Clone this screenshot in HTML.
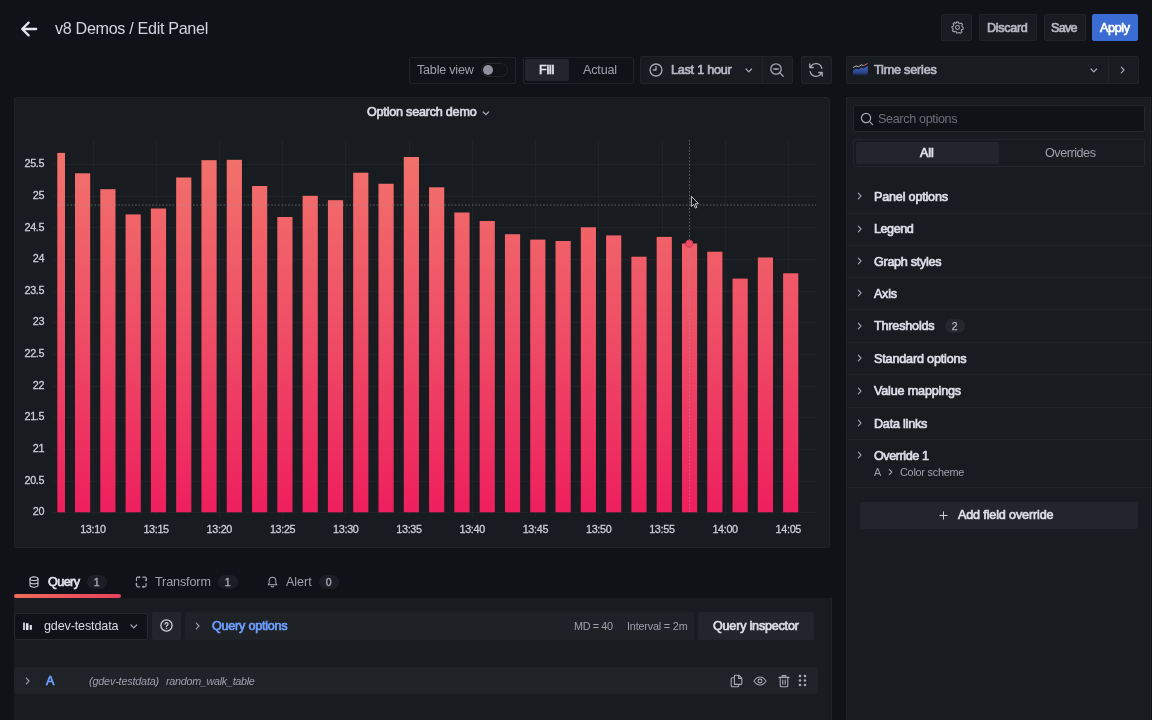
<!DOCTYPE html>
<html lang="en">
<head>
<meta charset="utf-8">
<title>v8 Demos / Edit Panel</title>
<style>
*{box-sizing:border-box;margin:0;padding:0}
html,body{width:1152px;height:720px;overflow:hidden;background:#111217;color:#ccccdc;font-family:"Liberation Sans",Arial,sans-serif;font-size:14px}
.abs{position:absolute}
.btn{position:absolute;height:27.500px;top:13.500px;border-radius:2px;background:#181b1f;border:1px solid #212329;color:#ccccdc;font-size:14px;font-weight:500;display:flex;align-items:center;justify-content:center;white-space:nowrap}
.box{position:absolute;border:1px solid #212329;border-radius:2px;background:#111217}
.t{position:absolute;white-space:nowrap;line-height:1;will-change:transform}
.sec{color:#9d9eab}
.row{position:absolute;left:847px;width:305px;border-top:1px solid #24262b}
.row .t{left:27px;font-weight:700;font-size:14px;color:#d0d1dd}
svg{position:absolute;overflow:visible}
svg.chart,.badge{will-change:transform}
.ic{fill:none;stroke:#a9aab5;stroke-width:1.3;stroke-linecap:round;stroke-linejoin:round}
.chev{fill:none;stroke:#9d9eab;stroke-width:1.2;stroke-linecap:round;stroke-linejoin:round}
.badge{position:absolute;background:rgba(204,204,220,0.07);border-radius:10px;font-size:12px;color:#a6a7b3;-webkit-text-stroke:0.4px #a6a7b3;display:flex;align-items:center;justify-content:center}
</style>
</head>
<body>
<!-- ===== top bar ===== -->
<svg class="abs" style="left:20px;top:20px" width="18" height="18" viewBox="0 0 18 18"><path d="M16.2 9H2.6M8.6 2.6L2.2 9l6.4 6.4" fill="none" stroke="#e4e5ee" stroke-width="2.3" stroke-linecap="round" stroke-linejoin="round"/></svg>

<div class="btn" style="left:941px;width:31px"></div>
<svg style="left:950.500px;top:20.800px" width="13" height="13" viewBox="0 0 14 14"><circle cx="7" cy="7" r="2.1" style="stroke-width:1.1" class="ic"/><path style="stroke-width:1.1" class="ic" d="M5.9 1h2.2l.35 1.6 1.1.47 1.4-.88 1.55 1.55-.88 1.4.47 1.1L13 6.6v2.2l-1.6.35-.47 1.1.88 1.4-1.55 1.55-1.4-.88-1.1.47L7.4 13H5.9l-.35-1.6-1.1-.47-1.4.88L1.5 10.26l.88-1.4-.47-1.1L1 7.4V5.9l1.6-.35.47-1.1-.88-1.4L3.74 1.5l1.4.88 1.1-.47z"/></svg>
<div class="btn" style="left:979px;width:58px"></div>
<div class="btn" style="left:1043.500px;width:42px"></div>
<div class="btn" style="left:1092px;width:46px;background:#3b6cd4;border-color:#3b6cd4"></div>

<!-- ===== toolbar row ===== -->
<div class="box" style="left:408.500px;top:56.500px;width:107px;height:27px"></div>
<div class="abs" style="left:481px;top:63px;width:27px;height:14px;border-radius:7px;background:#111217;border:1px solid #24262c"></div>
<div class="abs" style="left:483px;top:65px;width:10px;height:10px;border-radius:5px;background:#8f909c"></div>

<div class="box" style="left:522.500px;top:56.500px;width:111px;height:27px"></div>
<div class="abs" style="left:525px;top:59px;width:44px;height:22px;background:#22252b;border-radius:2px"></div>

<div class="box" style="left:640px;top:56px;width:153px;height:27.500px;background:#181b1f"></div>
<div class="abs" style="left:762px;top:57px;width:1px;height:26px;background:#212329"></div>
<svg style="left:649px;top:63px" width="14" height="14" viewBox="0 0 14 14"><circle cx="7" cy="7" r="6" class="ic"/><path class="ic" d="M7 3.6V7H4.4"/></svg>
<svg style="left:744.500px;top:68px" width="8" height="5" viewBox="0 0 8 5"><path style="stroke:#a9aab6" class="chev" d="M1 1l2.800 2.800L6.600 1"/></svg>
<svg style="left:769px;top:62px" width="16" height="16" viewBox="0 0 16 16"><circle cx="7" cy="7" r="5.2" class="ic"/><path class="ic" d="M4.7 7h4.6M10.9 10.9l3.3 3.3"/></svg>

<div class="box" style="left:801px;top:56px;width:31px;height:27.500px;background:#181b1f"></div>
<svg style="left:808px;top:62px" width="16" height="16" viewBox="0 0 16 16"><path class="ic" d="M13.8 6.3A6 6 0 0 0 3 4.2L1.8 5.5M1.8 2v3.5h3.5M2.2 9.7A6 6 0 0 0 13 11.8l1.2-1.3M14.2 14v-3.5h-3.5"/></svg>

<div class="box" style="left:845.500px;top:56px;width:293px;height:27.500px;background:#181b1f"></div>
<div class="abs" style="left:1108px;top:57px;width:1px;height:26px;background:#212329"></div>
<svg style="left:853px;top:63px" width="15" height="13" viewBox="0 0 15 13"><defs><linearGradient id="tsg" x1="0" y1="0" x2="0" y2="1"><stop offset="0" stop-color="#4467c0"/><stop offset="0.65" stop-color="#2c4590"/><stop offset="1" stop-color="#181f3a"/></linearGradient></defs><path d="M0 7.600L3 5.600l2.500 1 3-2.100 2 1 4.300-2.700V12.600H0z" fill="url(#tsg)"/><path d="M0 4.600l3-1.700 2.500.8 3-1.900 2 .8" fill="none" stroke="#c9cad3" stroke-width=".9"/><path d="M10.500 2.600L14.600 .5" fill="none" stroke="#e05a62" stroke-width="1"/></svg>
<svg style="left:1090.300px;top:68px" width="8" height="5" viewBox="0 0 8 5"><path style="stroke:#a9aab6" class="chev" d="M1 1l2.800 2.800L6.600 1"/></svg>
<svg style="left:1120px;top:66px" width="6" height="8" viewBox="0 0 6 8"><path style="stroke:#a9aab6" class="chev" d="M1.300 1.200L4 4 1.300 6.800"/></svg>

<!-- ===== chart panel ===== -->
<div class="abs" style="left:14px;top:97px;width:816px;height:451px;background:#181b1f;border:1px solid #202227;border-radius:2px"></div>
<svg style="left:482px;top:110.500px" width="8" height="5" viewBox="0 0 8 5"><path style="stroke:#a9aab6" class="chev" d="M1.200 1l2.700 2.700L6.600 1"/></svg>

<svg class="chart" style="left:0;top:0" width="1152" height="720" viewBox="0 0 1152 720" font-family="Liberation Sans, Arial, sans-serif" font-size="10.8" letter-spacing="-0.32" fill="#cdced9">
<defs>
<linearGradient id="bg" gradientUnits="userSpaceOnUse" x1="0" y1="150" x2="0" y2="512">
<stop offset="0" stop-color="#f2736b"/><stop offset="0.5" stop-color="#ef4e66"/><stop offset="1" stop-color="#ee1f5e"/>
</linearGradient>
<linearGradient id="bg2" gradientUnits="userSpaceOnUse" x1="0" y1="150" x2="0" y2="512">
<stop offset="0" stop-color="#e8646a"/><stop offset="1" stop-color="#e01c5c"/>
</linearGradient>
</defs>
<g stroke="rgba(204,204,220,0.045)" stroke-width="1" shape-rendering="crispEdges">
<line x1="52" x2="816" y1="512.5" y2="512.5"/>
<line x1="52" x2="816" y1="481.5" y2="481.5"/>
<line x1="52" x2="816" y1="449.5" y2="449.5"/>
<line x1="52" x2="816" y1="417.5" y2="417.5"/>
<line x1="52" x2="816" y1="386.5" y2="386.5"/>
<line x1="52" x2="816" y1="354.5" y2="354.5"/>
<line x1="52" x2="816" y1="322.5" y2="322.5"/>
<line x1="52" x2="816" y1="291.5" y2="291.5"/>
<line x1="52" x2="816" y1="259.5" y2="259.5"/>
<line x1="52" x2="816" y1="227.5" y2="227.5"/>
<line x1="52" x2="816" y1="196.5" y2="196.5"/>
<line x1="52" x2="816" y1="164.5" y2="164.5"/>
<line x1="93.5" x2="93.5" y1="140" y2="517"/>
<line x1="156.5" x2="156.5" y1="140" y2="517"/>
<line x1="219.5" x2="219.5" y1="140" y2="517"/>
<line x1="282.5" x2="282.5" y1="140" y2="517"/>
<line x1="345.5" x2="345.5" y1="140" y2="517"/>
<line x1="409.5" x2="409.5" y1="140" y2="517"/>
<line x1="472.5" x2="472.5" y1="140" y2="517"/>
<line x1="535.5" x2="535.5" y1="140" y2="517"/>
<line x1="598.5" x2="598.5" y1="140" y2="517"/>
<line x1="662.5" x2="662.5" y1="140" y2="517"/>
<line x1="725.5" x2="725.5" y1="140" y2="517"/>
<line x1="788.5" x2="788.5" y1="140" y2="517"/>
</g>
<g fill="url(#bg)">
<rect x="57.30" y="152.90" width="7.70" height="359.40"/>
<rect x="75.00" y="173.30" width="15.20" height="339.00"/>
<rect x="100.29" y="189.20" width="15.20" height="323.10"/>
<rect x="125.58" y="214.40" width="15.20" height="297.90"/>
<rect x="150.87" y="208.50" width="15.20" height="303.80"/>
<rect x="176.16" y="177.50" width="15.20" height="334.80"/>
<rect x="201.45" y="160.20" width="15.20" height="352.10"/>
<rect x="226.74" y="159.80" width="15.20" height="352.50"/>
<rect x="252.03" y="186.00" width="15.20" height="326.30"/>
<rect x="277.32" y="217.00" width="15.20" height="295.30"/>
<rect x="302.61" y="195.80" width="15.20" height="316.50"/>
<rect x="327.90" y="200.20" width="15.20" height="312.10"/>
<rect x="353.19" y="172.70" width="15.20" height="339.60"/>
<rect x="378.48" y="183.75" width="15.20" height="328.55"/>
<rect x="403.77" y="157.00" width="15.20" height="355.30"/>
<rect x="429.06" y="187.30" width="15.20" height="325.00"/>
<rect x="454.35" y="212.50" width="15.20" height="299.80"/>
<rect x="479.64" y="221.00" width="15.20" height="291.30"/>
<rect x="504.93" y="234.20" width="15.20" height="278.10"/>
<rect x="530.22" y="239.60" width="15.20" height="272.70"/>
<rect x="555.51" y="241.00" width="15.20" height="271.30"/>
<rect x="580.80" y="227.30" width="15.20" height="285.00"/>
<rect x="606.09" y="235.40" width="15.20" height="276.90"/>
<rect x="631.38" y="256.70" width="15.20" height="255.60"/>
<rect x="656.67" y="236.90" width="15.20" height="275.40"/>
<rect x="681.96" y="243.50" width="15.20" height="268.80"/>
<rect x="707.25" y="251.70" width="15.20" height="260.60"/>
<rect x="732.54" y="278.60" width="15.20" height="233.70"/>
<rect x="757.83" y="257.50" width="15.20" height="254.80"/>
<rect x="783.12" y="273.30" width="15.20" height="239.00"/>
</g>
<g stroke="#cdced9" stroke-width="0.3"><text x="44.2" y="515.3" text-anchor="end">20</text><text x="44.2" y="483.7" text-anchor="end">20.5</text><text x="44.2" y="452.0" text-anchor="end">21</text><text x="44.2" y="420.4" text-anchor="end">21.5</text><text x="44.2" y="388.7" text-anchor="end">22</text><text x="44.2" y="357.1" text-anchor="end">22.5</text><text x="44.2" y="325.4" text-anchor="end">23</text><text x="44.2" y="293.8" text-anchor="end">23.5</text><text x="44.2" y="262.1" text-anchor="end">24</text><text x="44.2" y="230.5" text-anchor="end">24.5</text><text x="44.2" y="198.8" text-anchor="end">25</text><text x="44.2" y="167.2" text-anchor="end">25.5</text>
<text x="92.9" y="532.8" text-anchor="middle">13:10</text><text x="156.1" y="532.8" text-anchor="middle">13:15</text><text x="219.3" y="532.8" text-anchor="middle">13:20</text><text x="282.6" y="532.8" text-anchor="middle">13:25</text><text x="345.8" y="532.8" text-anchor="middle">13:30</text><text x="409.0" y="532.8" text-anchor="middle">13:35</text><text x="472.2" y="532.8" text-anchor="middle">13:40</text><text x="535.4" y="532.8" text-anchor="middle">13:45</text><text x="598.7" y="532.8" text-anchor="middle">13:50</text><text x="661.9" y="532.8" text-anchor="middle">13:55</text><text x="725.1" y="532.8" text-anchor="middle">14:00</text><text x="788.3" y="532.8" text-anchor="middle">14:05</text></g>
<!-- crosshair -->
<line x1="689.5" x2="689.5" y1="140" y2="512" stroke="#9a9aa2" stroke-width="1" stroke-dasharray="1.600 1.800" opacity="0.550"/>
<line x1="57" x2="816" y1="205" y2="205" stroke="#9a9aa2" stroke-width="1" stroke-dasharray="1.600 1.800" opacity="0.550"/>
<circle cx="689.3" cy="243.6" r="3.6" fill="#ef4e66" stroke="#c93a55" stroke-width="1"/>
<!-- mouse cursor -->
<path d="M691.400 196.300V206.500l2.300-2.100 1.700 3.700 1.500-.7-1.700-3.600 3.200-.2z" fill="#121317" stroke="#d4d4da" stroke-width=".9" stroke-linejoin="round"/>
</svg>

<!-- ===== tabs ===== -->
<svg style="left:29.300px;top:575.500px" width="10" height="12" viewBox="0 0 12 14"><ellipse cx="6" cy="3" rx="4.8" ry="2.2" style="stroke:#d0d1dd" class="ic"/><path style="stroke:#d0d1dd" class="ic" d="M1.200 3v8c0 1.200 2.100 2.200 4.800 2.200s4.800-1 4.800-2.200V3M1.200 7c0 1.200 2.100 2.200 4.800 2.200s4.800-1 4.800-2.200"/></svg>
<div class="badge" style="left:87.300px;top:575px;width:19.500px;height:14px;font-size:10.500px">1</div>
<div class="abs" style="left:14px;top:594px;width:107px;height:3.500px;border-radius:2px;background:linear-gradient(90deg,#f26b5b,#e6415d)"></div>

<svg style="left:135px;top:575.500px" width="12.500" height="12" viewBox="0 0 12 12"><path style="stroke:#a3a4b0;stroke-width:1.200" class="ic" d="M1.200 4.600V2.400c0-.7.500-1.200 1.200-1.200h2M7.600 1.200h2.200c.7 0 1.200.5 1.200 1.200v2M10.800 7.600v2c0 .7-.5 1.200-1.200 1.200h-2.200M4.400 10.800h-2c-.7 0-1.200-.5-1.200-1.200V7.600"/><path d="M3.400 0l2.200 1.200-2.200 1.300zM12 3.400l-1.200 2.200-1.300-2.200zM8.600 12l-2.200-1.200 2.200-1.300zM0 8.600l1.200-2.200 1.300 2.200z" fill="#a3a4b0"/></svg>
<div class="badge" style="left:218px;top:575px;width:19.500px;height:14px;font-size:10.500px">1</div>

<svg style="left:267px;top:575.500px" width="11" height="12" viewBox="0 0 12 13"><path style="stroke-width:1.100" class="ic" d="M6 1.200c-2.200 0-3.600 1.600-3.600 3.800v2.600L1.200 9.400h9.600L9.600 7.600V5c0-2.200-1.400-3.800-3.600-3.800zM4.600 11.200c.3.500.8.800 1.400.8s1.100-.3 1.400-.8"/></svg>
<div class="badge" style="left:318.500px;top:575px;width:19.500px;height:14px;font-size:10.500px">0</div>

<!-- ===== query editor ===== -->
<div class="abs" style="left:14px;top:597.500px;width:818px;height:124px;background:#181b1f;border-right:1px solid #212328"></div>
<div class="box" style="left:13.500px;top:612.500px;width:134px;height:27px;border-color:#26282e"></div>
<svg style="left:23.300px;top:621.500px" width="10" height="9" viewBox="0 0 10 9"><path d="M1 .5v7.500" fill="none" stroke="#e0e1ea" stroke-width="1.700"/><path d="M4.200 1.200v6.800" fill="none" stroke="#e0e1ea" stroke-width="2.600"/><path d="M7.800 3v4.800" fill="none" stroke="#e0e1ea" stroke-width="2.200"/></svg>
<svg style="left:129.700px;top:624.300px" width="8" height="5" viewBox="0 0 8 5"><path style="stroke:#a9aab6" class="chev" d="M1 1l2.800 2.800L6.600 1"/></svg>
<div class="abs" style="left:152px;top:612px;width:29px;height:28px;background:#22252b;border-radius:2px"></div>
<svg style="left:160px;top:619px" width="13" height="13" viewBox="0 0 13 13"><circle cx="6.500" cy="6.500" r="5.600" style="stroke:#d0d1dd" class="ic"/><path style="stroke:#d0d1dd;stroke-width:1.200" class="ic" d="M4.900 5.200c0-1 .7-1.600 1.600-1.600s1.600.6 1.600 1.500c0 1.100-1.600 1.200-1.600 2.400"/><circle cx="6.500" cy="9.400" r=".7" fill="#d0d1dd"/></svg>
<div class="abs" style="left:185px;top:612px;width:509px;height:28px;background:#1e2126;border-radius:2px"></div>
<svg style="left:195.300px;top:622px" width="6" height="8" viewBox="0 0 6 8"><path class="chev" d="M1.300 1.200L4 4 1.300 6.800"/></svg>
<div class="abs" style="left:698px;top:612px;width:116px;height:28px;background:#22252b;border-radius:2px"></div>

<div class="abs" style="left:14px;top:667px;width:804px;height:27px;background:#1f2227;border-radius:2px"></div>
<svg style="left:24.500px;top:677px" width="6" height="8" viewBox="0 0 6 8"><path class="chev" d="M1.300 1.200L4 4 1.300 6.800"/></svg>
<!-- row icons -->
<svg style="left:730px;top:674px" width="13" height="14" viewBox="0 0 13 14"><path style="stroke-width:1.100" class="ic" d="M4.400 10.400V2.200c0-.6.400-1 1-1h3.400l3 3v5.200c0 .6-.4 1-1 1zM8.600 1.400v3h3M4.400 3.800H2.200c-.6 0-1 .4-1 1v7c0 .6.400 1 1 1h5.600c.6 0 1-.4 1-1v-1.400"/></svg>
<svg style="left:753px;top:675px" width="14" height="12" viewBox="0 0 14 12"><path style="stroke-width:1.100" class="ic" d="M1 6c1.600-2.600 3.600-4 6-4s4.400 1.400 6 4c-1.600 2.600-3.600 4-6 4S2.600 8.600 1 6z"/><circle cx="7" cy="6" r="1.900" style="stroke-width:1.100" class="ic"/></svg>
<svg style="left:778px;top:674px" width="12" height="14" viewBox="0 0 12 14"><path style="stroke-width:1.100" class="ic" d="M1 3.400h10M4.200 3.400V1.600h3.600v1.800M2.200 3.400v8.400c0 .6.400 1 1 1h5.600c.6 0 1-.4 1-1V3.400M4.800 6v4.200M7.200 6v4.200"/></svg>
<svg style="left:798px;top:674px" width="9" height="13" viewBox="0 0 9 13" fill="#a9aab5"><circle cx="2" cy="2" r="1.300"/><circle cx="7" cy="2" r="1.300"/><circle cx="2" cy="6.500" r="1.300"/><circle cx="7" cy="6.500" r="1.300"/><circle cx="2" cy="11" r="1.300"/><circle cx="7" cy="11" r="1.300"/></svg>

<!-- ===== right options pane ===== -->
<div class="abs" style="left:845.500px;top:97px;width:305px;height:625px;background:#181b1f;border:1px solid #202227"></div>
<div class="box" style="left:853px;top:105px;width:292px;height:27px;border-color:#25272d"></div>
<svg style="left:860px;top:112px" width="14" height="14" viewBox="0 0 14 14"><circle cx="6" cy="6" r="4.600" style="stroke-width:1.200" class="ic"/><path style="stroke-width:1.200" class="ic" d="M9.400 9.400l3.200 3.200"/></svg>

<div class="box" style="left:853px;top:139px;width:292px;height:27.500px;background:#181b1f;border-color:#24262c"></div>
<div class="abs" style="left:856px;top:142px;width:143px;height:22px;background:#22252b;border-radius:2px"></div>

<svg style="left:857px;top:191.8px" width="6" height="8" viewBox="0 0 6 8"><path class="chev" d="M1.300 1.200L4 4 1.300 6.800"/></svg><svg style="left:857px;top:224.6px" width="6" height="8" viewBox="0 0 6 8"><path class="chev" d="M1.300 1.200L4 4 1.300 6.800"/></svg><svg style="left:857px;top:257.0px" width="6" height="8" viewBox="0 0 6 8"><path class="chev" d="M1.300 1.200L4 4 1.300 6.800"/></svg><svg style="left:857px;top:289.3px" width="6" height="8" viewBox="0 0 6 8"><path class="chev" d="M1.300 1.200L4 4 1.300 6.800"/></svg><svg style="left:857px;top:321.6px" width="6" height="8" viewBox="0 0 6 8"><path class="chev" d="M1.300 1.200L4 4 1.300 6.800"/></svg><svg style="left:857px;top:354.4px" width="6" height="8" viewBox="0 0 6 8"><path class="chev" d="M1.300 1.200L4 4 1.300 6.800"/></svg><svg style="left:857px;top:386.6px" width="6" height="8" viewBox="0 0 6 8"><path class="chev" d="M1.300 1.200L4 4 1.300 6.800"/></svg><svg style="left:857px;top:419.0px" width="6" height="8" viewBox="0 0 6 8"><path class="chev" d="M1.300 1.200L4 4 1.300 6.800"/></svg><svg style="left:857px;top:451.2px" width="6" height="8" viewBox="0 0 6 8"><path class="chev" d="M1.300 1.200L4 4 1.300 6.800"/></svg><div class="abs" style="left:847px;top:213px;width:305px;height:1px;background:#212328"></div><div class="abs" style="left:847px;top:245px;width:305px;height:1px;background:#212328"></div><div class="abs" style="left:847px;top:277px;width:305px;height:1px;background:#212328"></div><div class="abs" style="left:847px;top:309px;width:305px;height:1px;background:#212328"></div><div class="abs" style="left:847px;top:342px;width:305px;height:1px;background:#212328"></div><div class="abs" style="left:847px;top:374px;width:305px;height:1px;background:#212328"></div><div class="abs" style="left:847px;top:407px;width:305px;height:1px;background:#212328"></div><div class="abs" style="left:847px;top:439px;width:305px;height:1px;background:#212328"></div><div class="abs" style="left:847px;top:487px;width:305px;height:1px;background:#212328"></div><div class="badge" style="left:945px;top:319px;width:19.500px;height:14px;font-size:10.500px">2</div><svg style="left:887.5px;top:468px" width="6" height="8" viewBox="0 0 6 8"><path class="chev" d="M1.300 1.400L3.800 4 1.300 6.600"/></svg>
<div class="abs" style="left:860px;top:502px;width:278px;height:27px;background:#22252b;border-radius:2px"></div>
<svg style="left:939px;top:510.500px" width="9" height="9" viewBox="0 0 11 11"><path style="stroke:#d0d1dd;stroke-width:1.200" class="ic" d="M5.500 1v9M1 5.500h9"/></svg>
<div class="t" style="left:55.0px;top:16.7px;font-size:16.2px;line-height:23px;letter-spacing:-0.346px;color:#d3d4e0">v8 Demos / Edit Panel</div>
<div class="t" style="left:987.4px;top:19.0px;font-size:12.6px;line-height:18px;letter-spacing:-0.315px;color:#b6b7c4;-webkit-text-stroke:0.7px #b6b7c4">Discard</div>
<div class="t" style="left:1051.0px;top:19.0px;font-size:12.6px;line-height:18px;letter-spacing:-0.755px;color:#b6b7c4;-webkit-text-stroke:0.7px #b6b7c4">Save</div>
<div class="t" style="left:1100.0px;top:19.0px;font-size:12.6px;line-height:18px;letter-spacing:-0.364px;color:#ffffff;-webkit-text-stroke:0.7px #ffffff">Apply</div>
<div class="t" style="left:416.7px;top:61.0px;font-size:12.6px;line-height:18px;letter-spacing:-0.223px;color:#9fa0ad">Table view</div>
<div class="t" style="left:539.0px;top:61.0px;font-size:12.6px;line-height:18px;letter-spacing:-0.299px;color:#e0e1ea;-webkit-text-stroke:0.7px #e0e1ea">Fill</div>
<div class="t" style="left:583.0px;top:61.0px;font-size:12.6px;line-height:18px;letter-spacing:-0.170px;color:#9fa0ad">Actual</div>
<div class="t" style="left:670.8px;top:61.0px;font-size:12.6px;line-height:18px;letter-spacing:-0.231px;color:#b6b7c4;-webkit-text-stroke:0.7px #b6b7c4">Last 1 hour</div>
<div class="t" style="left:874.0px;top:61.0px;font-size:12.6px;line-height:18px;letter-spacing:-0.185px;color:#b6b7c4;-webkit-text-stroke:0.7px #b6b7c4">Time series</div>
<div class="t" style="left:366.5px;top:102.5px;font-size:12.6px;line-height:18px;letter-spacing:-0.220px;color:#d8d9e4;-webkit-text-stroke:0.7px #d8d9e4">Option search demo</div>
<div class="t" style="left:878.3px;top:109.6px;font-size:12.6px;line-height:18px;letter-spacing:-0.346px;color:#6e6f7b">Search options</div>
<div class="t" style="left:920.0px;top:144.0px;font-size:12.6px;line-height:18px;letter-spacing:-0.135px;color:#e0e1ea;-webkit-text-stroke:0.7px #e0e1ea">All</div>
<div class="t" style="left:1045.0px;top:144.0px;font-size:12.6px;line-height:18px;letter-spacing:-0.457px;color:#9fa0ad">Overrides</div>
<div class="t" style="left:873.8px;top:187.5px;font-size:12.6px;line-height:18px;letter-spacing:-0.189px;color:#dcdde8;-webkit-text-stroke:0.7px #dcdde8">Panel options</div>
<div class="t" style="left:873.8px;top:220.3px;font-size:12.6px;line-height:18px;letter-spacing:-0.457px;color:#dcdde8;-webkit-text-stroke:0.7px #dcdde8">Legend</div>
<div class="t" style="left:873.8px;top:252.7px;font-size:12.6px;line-height:18px;letter-spacing:-0.294px;color:#dcdde8;-webkit-text-stroke:0.7px #dcdde8">Graph styles</div>
<div class="t" style="left:873.8px;top:285.0px;font-size:12.6px;line-height:18px;letter-spacing:-0.276px;color:#dcdde8;-webkit-text-stroke:0.7px #dcdde8">Axis</div>
<div class="t" style="left:873.8px;top:317.3px;font-size:12.6px;line-height:18px;letter-spacing:-0.182px;color:#dcdde8;-webkit-text-stroke:0.7px #dcdde8">Thresholds</div>
<div class="t" style="left:873.8px;top:350.1px;font-size:12.6px;line-height:18px;letter-spacing:-0.173px;color:#dcdde8;-webkit-text-stroke:0.7px #dcdde8">Standard options</div>
<div class="t" style="left:873.8px;top:382.3px;font-size:12.6px;line-height:18px;letter-spacing:-0.173px;color:#dcdde8;-webkit-text-stroke:0.7px #dcdde8">Value mappings</div>
<div class="t" style="left:873.8px;top:414.7px;font-size:12.6px;line-height:18px;letter-spacing:-0.222px;color:#dcdde8;-webkit-text-stroke:0.7px #dcdde8">Data links</div>
<div class="t" style="left:873.8px;top:446.9px;font-size:12.6px;line-height:18px;letter-spacing:-0.432px;color:#dcdde8;-webkit-text-stroke:0.7px #dcdde8">Override 1</div>
<div class="t" style="left:873.8px;top:464.5px;font-size:10.8px;line-height:15px;letter-spacing:-0.804px;color:#9fa0ad">A</div>
<div class="t" style="left:900.0px;top:464.5px;font-size:10.8px;line-height:15px;letter-spacing:-0.210px;color:#9fa0ad">Color scheme</div>
<div class="t" style="left:957.5px;top:506.2px;font-size:12.6px;line-height:18px;letter-spacing:-0.142px;color:#dcdde8;-webkit-text-stroke:0.7px #dcdde8">Add field override</div>
<div class="t" style="left:47.8px;top:572.5px;font-size:12.6px;line-height:18px;letter-spacing:-0.562px;color:#e0e1ea;-webkit-text-stroke:0.7px #e0e1ea">Query</div>
<div class="t" style="left:155.2px;top:572.5px;font-size:12.6px;line-height:18px;letter-spacing:-0.126px;color:#9fa0ad">Transform</div>
<div class="t" style="left:286.0px;top:572.5px;font-size:12.6px;line-height:18px;letter-spacing:-0.061px;color:#9fa0ad">Alert</div>
<div class="t" style="left:43.6px;top:617.0px;font-size:12.6px;line-height:18px;letter-spacing:-0.150px;color:#d8d9e4">gdev-testdata</div>
<div class="t" style="left:211.9px;top:617.0px;font-size:12.6px;line-height:18px;letter-spacing:-0.234px;color:#6e9fff;-webkit-text-stroke:0.7px #6e9fff">Query options</div>
<div class="t" style="left:573.8px;top:618.5px;font-size:10.8px;line-height:15px;letter-spacing:-0.345px;color:#9fa0ad">MD = 40</div>
<div class="t" style="left:626.7px;top:618.5px;font-size:10.8px;line-height:15px;letter-spacing:-0.171px;color:#9fa0ad">Interval = 2m</div>
<div class="t" style="left:712.7px;top:616.5px;font-size:12.6px;line-height:18px;letter-spacing:-0.215px;color:#dcdde8;-webkit-text-stroke:0.7px #dcdde8">Query inspector</div>
<div class="t" style="left:45.7px;top:672.0px;font-size:12.6px;line-height:18px;letter-spacing:-1.105px;color:#6e9fff;-webkit-text-stroke:0.7px #6e9fff">A</div>
<div class="t" style="left:88.5px;top:673.5px;font-size:10.8px;line-height:15px;letter-spacing:-0.175px;color:#9fa0ad;font-style:italic">(gdev-testdata)</div>
<div class="t" style="left:165.8px;top:673.5px;font-size:10.8px;line-height:15px;letter-spacing:-0.297px;color:#9fa0ad;font-style:italic">random_walk_table</div>

</body>
</html>
